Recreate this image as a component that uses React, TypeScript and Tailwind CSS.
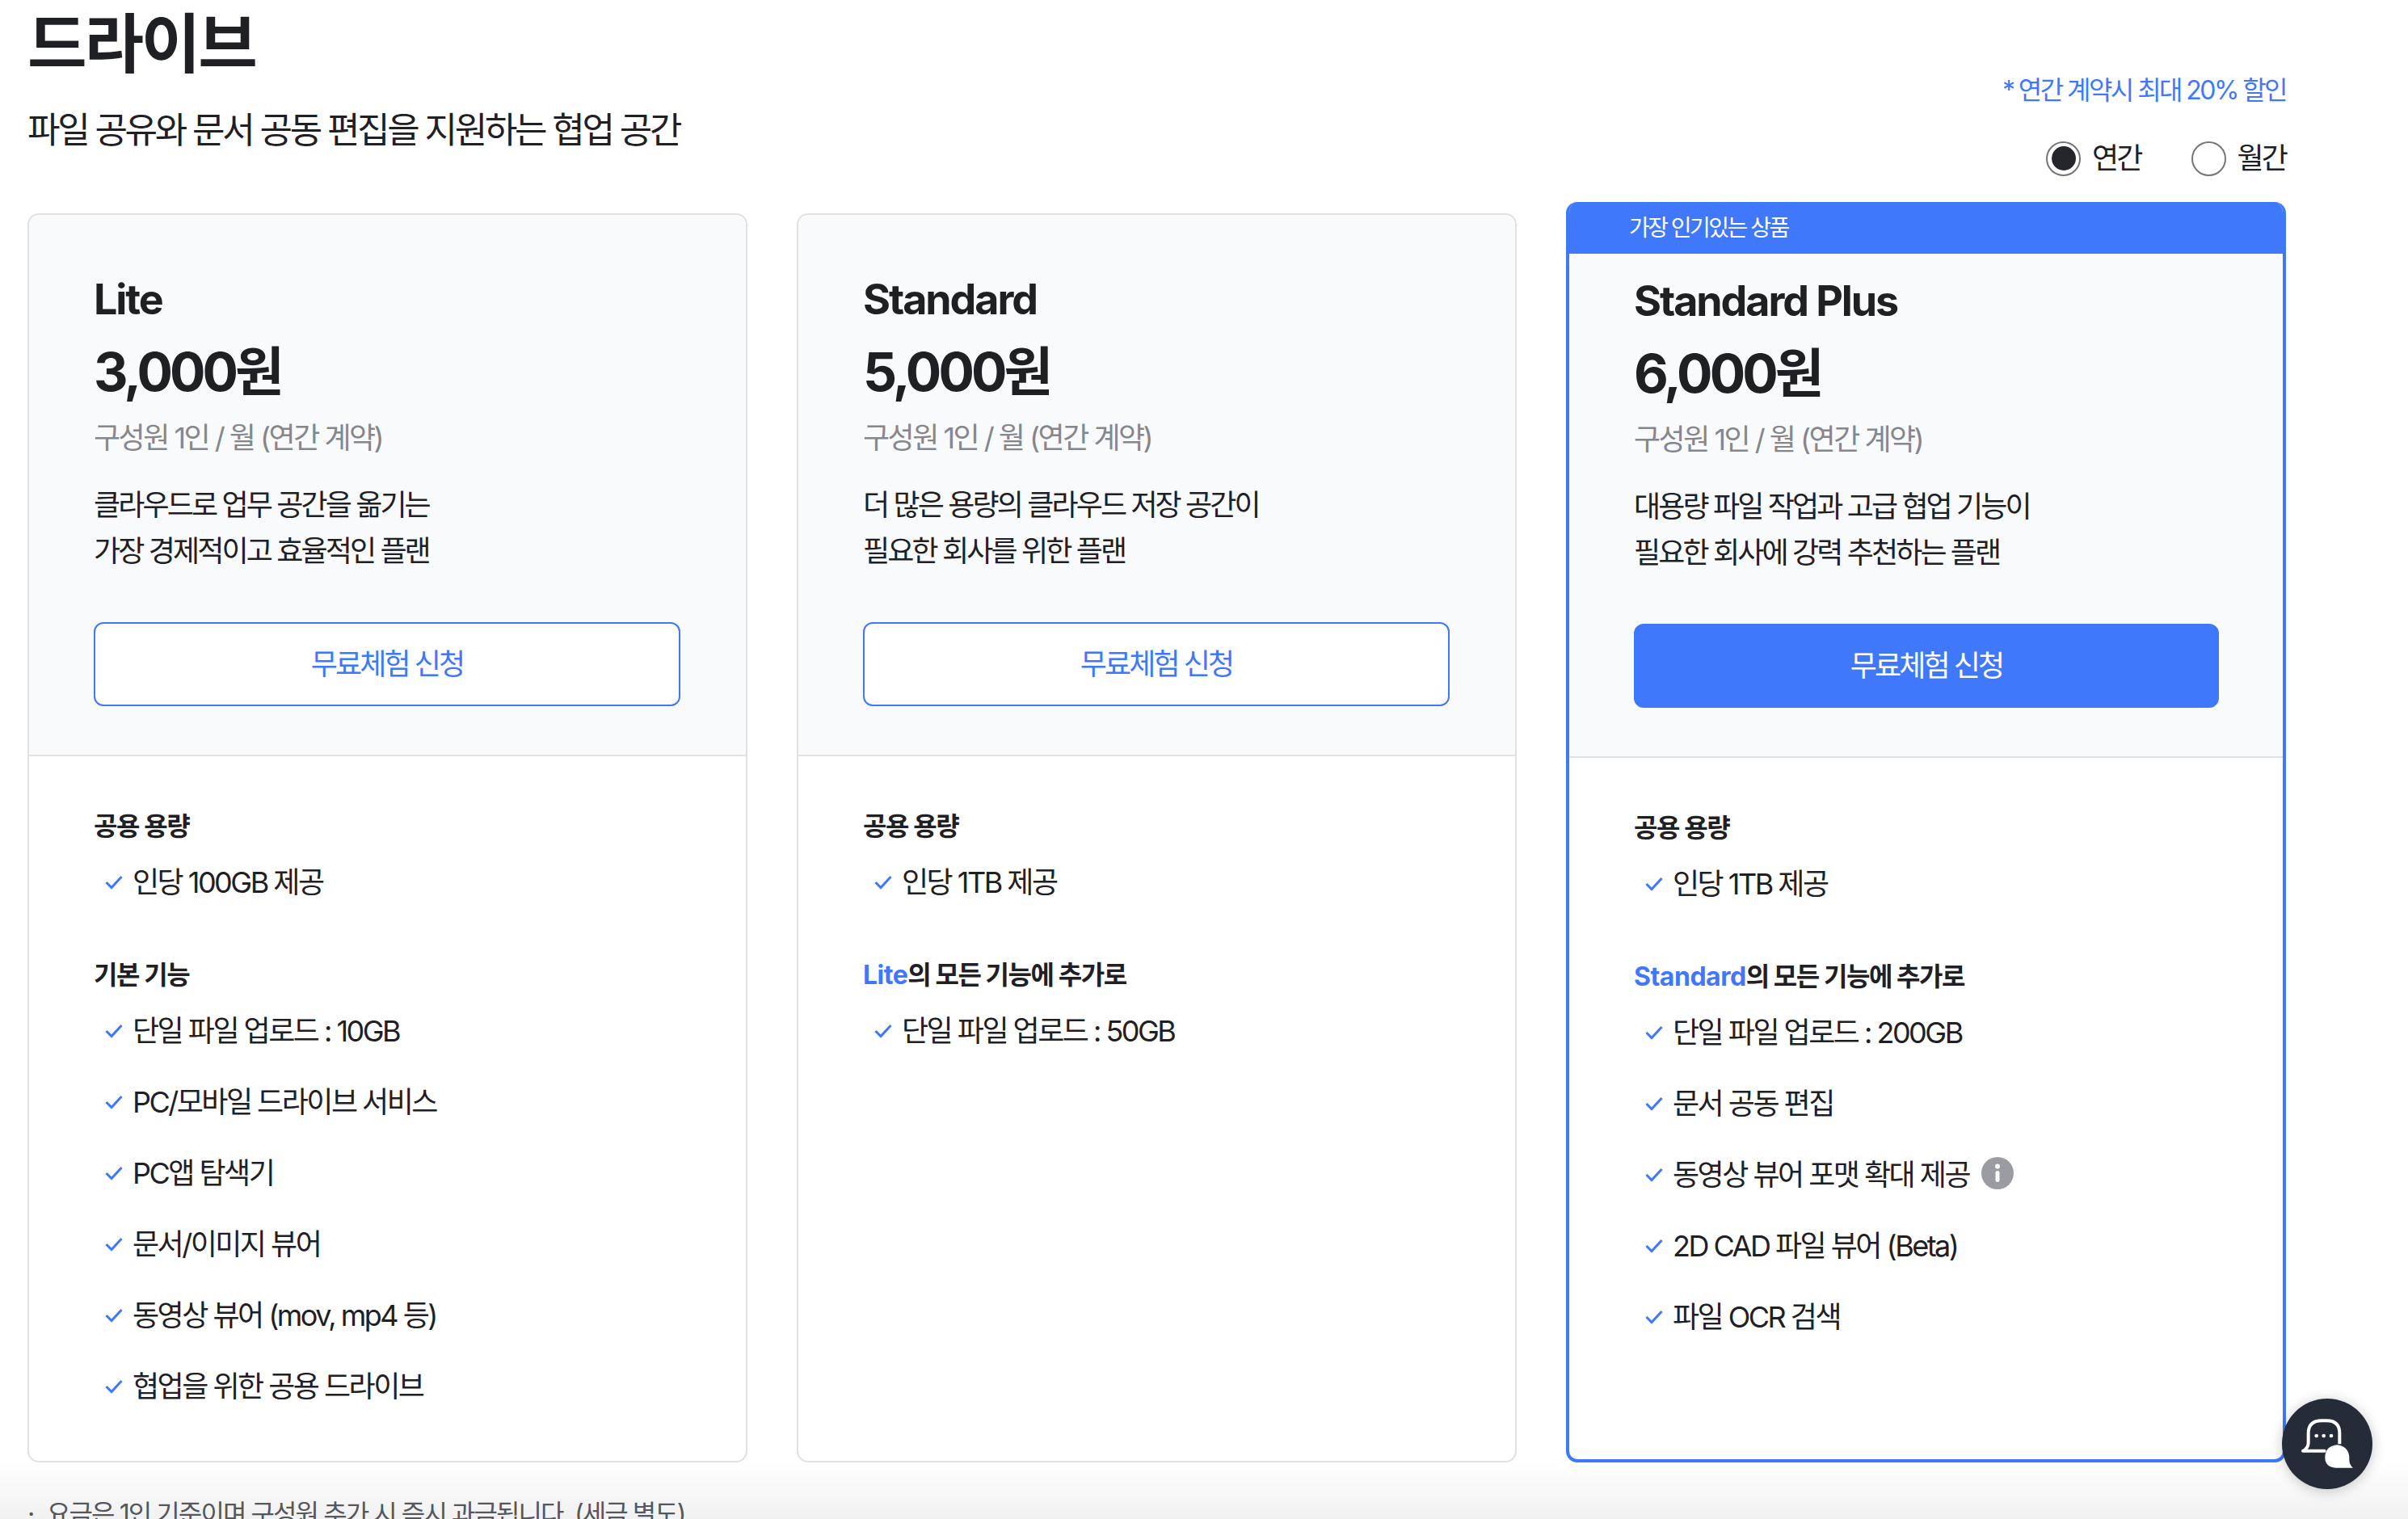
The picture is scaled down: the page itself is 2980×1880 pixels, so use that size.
import React from "react";

const FONT = "font-['Inter','Noto_Sans_CJK_KR',sans-serif]";

type Group = { label: React.ReactNode; items: { text: string; info?: boolean }[] };

type Plan = {
  name: string;
  price: string;
  desc: string[];
  groups: Group[];
  featured?: boolean;
};

const plans: Plan[] = [
  {
    name: "Lite",
    price: "3,000원",
    desc: ["클라우드로 업무 공간을 옮기는", "가장 경제적이고 효율적인 플랜"],
    groups: [
      { label: "공용 용량", items: [{ text: "인당 100GB 제공" }] },
      {
        label: "기본 기능",
        items: [
          { text: "단일 파일 업로드 : 10GB" },
          { text: "PC/모바일 드라이브 서비스" },
          { text: "PC앱 탐색기" },
          { text: "문서/이미지 뷰어" },
          { text: "동영상 뷰어 (mov, mp4 등)" },
          { text: "협업을 위한 공용 드라이브" },
        ],
      },
    ],
  },
  {
    name: "Standard",
    price: "5,000원",
    desc: ["더 많은 용량의 클라우드 저장 공간이", "필요한 회사를 위한 플랜"],
    groups: [
      { label: "공용 용량", items: [{ text: "인당 1TB 제공" }] },
      {
        label: (
          <>
            <span className="tracking-[-0.015em] text-[#3f78fa]">Lite</span>의 모든 기능에 추가로
          </>
        ),
        items: [{ text: "단일 파일 업로드 : 50GB" }],
      },
    ],
  },
  {
    name: "Standard Plus",
    price: "6,000원",
    desc: ["대용량 파일 작업과 고급 협업 기능이", "필요한 회사에 강력 추천하는 플랜"],
    featured: true,
    groups: [
      { label: "공용 용량", items: [{ text: "인당 1TB 제공" }] },
      {
        label: (
          <>
            <span className="tracking-[-0.015em] text-[#3f78fa]">Standard</span>의 모든 기능에 추가로
          </>
        ),
        items: [
          { text: "단일 파일 업로드 : 200GB" },
          { text: "문서 공동 편집" },
          { text: "동영상 뷰어 포맷 확대 제공", info: true },
          { text: "2D CAD 파일 뷰어 (Beta)" },
          { text: "파일 OCR 검색" },
        ],
      },
    ],
  },
];

const Check = () => (
  <svg width="22" height="18" viewBox="0 0 22 18" fill="none" className="shrink-0">
    <path d="M1.5 9 L8 15.5 L20.5 2" stroke="#3f78fa" strokeWidth="3" />
  </svg>
);

const Info = () => (
  <svg width="40" height="40" viewBox="0 0 40 40" className="ml-[15px] -mt-[4px]">
    <circle cx="20" cy="20" r="20" fill="#9a9ca1" />
    <circle cx="20" cy="11.5" r="3" fill="#fff" />
    <rect x="17.5" y="17" width="5" height="14" rx="2.5" fill="#fff" />
  </svg>
);

const Radio = ({ label, checked }: { label: string; checked?: boolean }) => (
  <div className="flex items-center gap-[14px]">
    <span className="flex h-[43px] w-[43px] items-center justify-center rounded-full border-2 border-[#767676] bg-white">
      {checked && <span className="h-[30px] w-[30px] rounded-full bg-[#24262b]" />}
    </span>
    <span className="text-[36px] leading-[48px] tracking-[-0.08em] text-[#1f2024]">{label}</span>
  </div>
);

const PlanCard = ({ plan }: { plan: Plan }) => (
  <div
    className={
      plan.featured
        ? "h-[1560px] overflow-hidden rounded-[14px] border-[4px] border-t-0 border-[#3f78fa] bg-white"
        : "h-[1546px] overflow-hidden rounded-[14px] border-2 border-[#dfe1e5] bg-white"
    }
  >
    {plan.featured && (
      <div className="flex h-[64px] items-center bg-[#3f78fa] pl-[74px] text-[28px] tracking-[-0.09em] text-white">
        가장 인기있는 상품
      </div>
    )}
    <div
      className={`border-b-2 border-[#dfe1e5] bg-[#f9fafc] pb-[60px] ${
        plan.featured ? "pl-[80px] pr-[79px] pt-[31px]" : "pl-[80px] pr-[81px] pt-[77px]"
      }`}
    >
      <div className="text-[52px] font-bold leading-[56px] tracking-[-0.04em] text-[#1f2024]">{plan.name}</div>
      <div className="mt-[26px] text-[66px] font-bold leading-[70px] tracking-[-0.06em] text-[#1f2024]">{plan.price}</div>
      <div className="mt-[22px] text-[36px] leading-[50px] tracking-[-0.07em] text-[#85878c]">
        구성원 1인 / 월 (연간 계약)
      </div>
      <div className="mt-[30px] text-[36px] leading-[57px] tracking-[-0.08em] text-[#1f2024]">
        {plan.desc.map((line) => (
          <div key={line}>{line}</div>
        ))}
      </div>
      <button
        className={
          plan.featured
            ? "mt-[59px] flex h-[104px] w-full items-center justify-center rounded-[12px] bg-[#3f78fa] text-[36px] tracking-[-0.08em] text-white"
            : "mt-[59px] flex h-[104px] w-full items-center justify-center rounded-[12px] border-2 border-[#3f78fa] bg-white text-[36px] tracking-[-0.08em] text-[#3f78fa]"
        }
      >
        무료체험 신청
      </button>
    </div>
    <div className="pl-[80px] pt-[67px]">
      {plan.groups.map((group, i) => (
        <div key={i} className={i > 0 ? "mt-[71px]" : ""}>
          <div className="text-[32px] font-bold leading-[40px] tracking-[-0.045em] text-[#1f2024]">{group.label}</div>
          <div className="mt-[25px] flex flex-col gap-[40px]">
            {group.items.map((item) => (
              <div key={item.text} className="flex h-[48px] items-center pl-[14px] text-[36px] tracking-[-0.07em] text-[#1f2024]">
                <Check />
                <span className="ml-[12px]">{item.text}</span>
                {item.info && <Info />}
              </div>
            ))}
          </div>
        </div>
      ))}
    </div>
  </div>
);

export default function App() {
  return (
    <div className={`relative h-[1880px] w-[2980px] overflow-hidden bg-white ${FONT}`}>
      {/* bottom fade, sits behind the page text */}
      <div className="pointer-events-none absolute inset-x-0 bottom-0 h-[70px] bg-gradient-to-b from-transparent to-[#f1f1f1]" />

      <div className="relative w-[2829px] pl-[34px]">
        <div className="flex h-[250px] justify-between">
          <div className="pt-[6px]">
            <h1 className="text-[80px] font-bold leading-[96px] tracking-[-0.04em] text-[#1f2024]">드라이브</h1>
            <p className="mt-[29px] text-[44px] leading-[60px] tracking-[-0.075em] text-[#1f2024]">
              파일 공유와 문서 공동 편집을 지원하는 협업 공간
            </p>
          </div>
          <div className="flex flex-col items-end pt-[90px]">
            <div className="text-[32px] leading-[44px] tracking-[-0.08em] text-[#3f78fa]">* 연간 계약시 최대 20% 할인</div>
            <div className="mt-[38px] flex gap-[62px]">
              <Radio label="연간" checked />
              <Radio label="월간" />
            </div>
          </div>
        </div>
        <div className="grid grid-cols-[891px_891px_891px] items-end gap-x-[61px]">
          {plans.map((plan) => (
            <PlanCard key={plan.name} plan={plan} />
          ))}
        </div>
        <div className="mt-[41px] flex text-[32px] leading-[46px] tracking-[-0.06em] text-[#55575c]">
          <span className="w-[24px]">·</span>
          <span>요금은 1인 기준이며 구성원 추가 시 즉시 과금됩니다. (세금 별도)</span>
        </div>
      </div>

      {/* chat button */}
      <div className="absolute left-[2824px] top-[1731px] h-[112px] w-[112px] rounded-full bg-[#252b37] shadow-[0_2px_16px_rgba(0,0,0,0.22)]">
        <svg viewBox="372 156 336 336" className="h-full w-full">
          <path d="M452 350 Q470 338 470 320 V285 Q470 238 520 238 H538 Q586 238 586 285 V325" fill="none" stroke="#fff" strokeWidth="12" />
          <path d="M450 350 H530" fill="none" stroke="#fff" strokeWidth="12" strokeLinecap="round" />
          <path d="M532 375 Q532 332 578 328 Q625 335 622 385 Q622 402 636 413 H572 Q532 410 532 375 Z" fill="#fff" />
          <circle cx="500" cy="294" r="7" fill="#fff" />
          <circle cx="527" cy="294" r="7" fill="#fff" />
          <circle cx="555" cy="294" r="7" fill="#fff" />
        </svg>
      </div>
    </div>
  );
}
